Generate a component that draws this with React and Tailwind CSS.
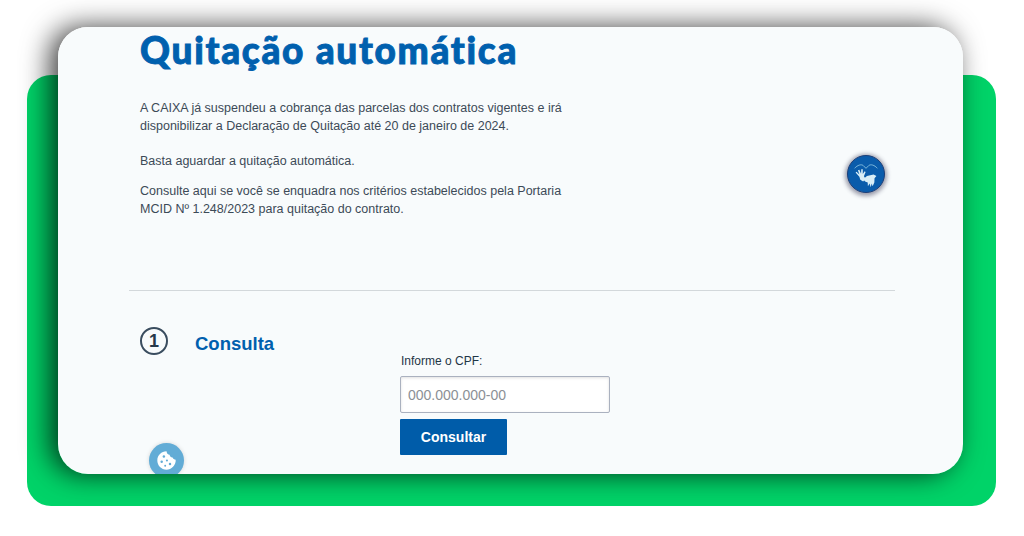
import React from 'react';

const LibrasIcon = () => (
  <svg viewBox="0 0 38 38" className="w-full h-full">
    <path d="M7 13 C10 9.5 14 8.5 16 10 L19 13 L22 10 C24 8.5 28 9.5 31 13" fill="none" stroke="#9fd3ea" strokeWidth="0.8" />
    <path d="M12 22 L8 17.5 L9 16.5 L12 19.5 L10.5 15 L12 14.5 L13.8 18.8 L14 14 L15.6 14 L15.6 19 L17.6 16 L18.6 16.8 L16.8 21.5 L18.5 24 L16 27 L13 25 Z" fill="#d9eef7" />
    <path d="M16 24.5 L20 21 L27 19.5 L30 21 L28 23.5 L27.8 28 L26 32 L25 29 L24 33 L22.8 29 L21 32 L20.8 28 L18 27 Z" fill="#d9eef7" />
  </svg>
);

const CookieIcon = () => (
  <svg viewBox="0 0 24 24" className="w-full h-full">
    <path d="M12 1.5 C12.5 4.5 14 5.5 15.5 5.5 C15.8 7.5 17.5 8.8 19 8.5 C19.5 10 20.8 11 22.5 11 C23 17 17.5 22.5 12 22.5 C6.2 22.5 1.5 17.8 1.5 12 C1.5 6.2 6.2 1.5 12 1.5 Z" fill="#ffffff" />
    <circle cx="9" cy="7.5" r="1.4" fill="#62acd6" />
    <circle cx="6.5" cy="13.5" r="1.4" fill="#62acd6" />
    <circle cx="12.5" cy="12" r="1.2" fill="#62acd6" />
    <circle cx="16" cy="16" r="1.4" fill="#62acd6" />
    <circle cx="10.5" cy="18" r="1.1" fill="#62acd6" />
  </svg>
);

export default function App() {
  return (
    <div className="w-[1024px] h-[536px] bg-white overflow-hidden pt-[75px] font-['Liberation_Sans',Arial,sans-serif]">
      <div className="ml-[27px] w-[969px] h-[431px] bg-[#00d368] rounded-[24px]">
        <div className="relative -top-[48px] ml-[31px] w-[905px] h-[447px]">
          <div className="absolute inset-0 rounded-[30px] shadow-[-8px_0_28px_0_rgba(0,0,0,0.75)]" />
          <div className="relative w-full h-full rounded-[30px] bg-[#f8fbfc] overflow-hidden">
            <div className="pl-[82px]">
              <h1 className="h-[48px] pt-[1px] text-[37px] leading-[44px] font-black tracking-[1.7px] text-[#0060ae] font-['Lato',sans-serif] whitespace-nowrap [-webkit-text-stroke:0.9px_#0060ae]">
                Quitação automática
              </h1>
              <div className="mt-[24px] w-[430px] leading-[18px] text-[#3c4a57] text-[12.5px]">
                <p>A CAIXA já suspendeu a cobrança das parcelas dos contratos vigentes e irá disponibilizar a Declaração de Quitação até 20 de janeiro de 2024.</p>
                <p className="mt-[17px]">Basta aguardar a quitação automática.</p>
                <p className="mt-[12px]">Consulte aqui se você se enquadra nos critérios estabelecidos pela Portaria MCID Nº 1.248/2023 para quitação do contrato.</p>
              </div>
            </div>
            <div className="mt-[72px] ml-[71px] w-[766px] border-t border-[#d3d8db]" />
            <div className="flex mt-[36px] pl-[82px]">
              <div className="w-[28px] h-[28px] rounded-full border-2 border-[#3a4d5f] flex items-center justify-center text-[18px] font-black leading-none text-[#26394a]">
                1
              </div>
              <h2 className="ml-[27px] mt-[6px] text-[18.5px] leading-[22px] font-bold text-[#0060ae]">Consulta</h2>
            </div>
            <div className="ml-[342px] -mt-[1px] w-[210px]">
              <label className="block ml-[1px] text-[12px] leading-[14px] text-[#1f3647]">Informe o CPF:</label>
              <input
                placeholder="000.000.000-00"
                className="block mt-[8px] w-[210px] h-[37px] px-[7px] bg-white border border-[#aab1bf] rounded-[2px] text-[14px] shadow-[inset_0_1px_3px_rgba(0,0,0,0.12)] placeholder:text-[#8b9096] outline-none"
              />
              <button className="block mt-[6px] w-[107px] h-[36px] bg-[#005ca9] rounded-[1px] text-white text-[14px] font-bold">
                Consultar
              </button>
            </div>
            <button className="absolute left-[789px] top-[128px] w-[38px] h-[38px] rounded-full bg-[#0a5cab] border border-[#1d3f78] shadow-[0_1px_4px_2px_rgba(40,40,70,0.45)]">
              <LibrasIcon />
            </button>
            <div className="absolute left-[91px] top-[416px] w-[35px] h-[35px] rounded-full bg-[#62acd6] p-[7px] shadow-[0_0_4px_rgba(0,0,0,0.15)]">
              <CookieIcon />
            </div>
          </div>
        </div>
      </div>
    </div>
  );
}
